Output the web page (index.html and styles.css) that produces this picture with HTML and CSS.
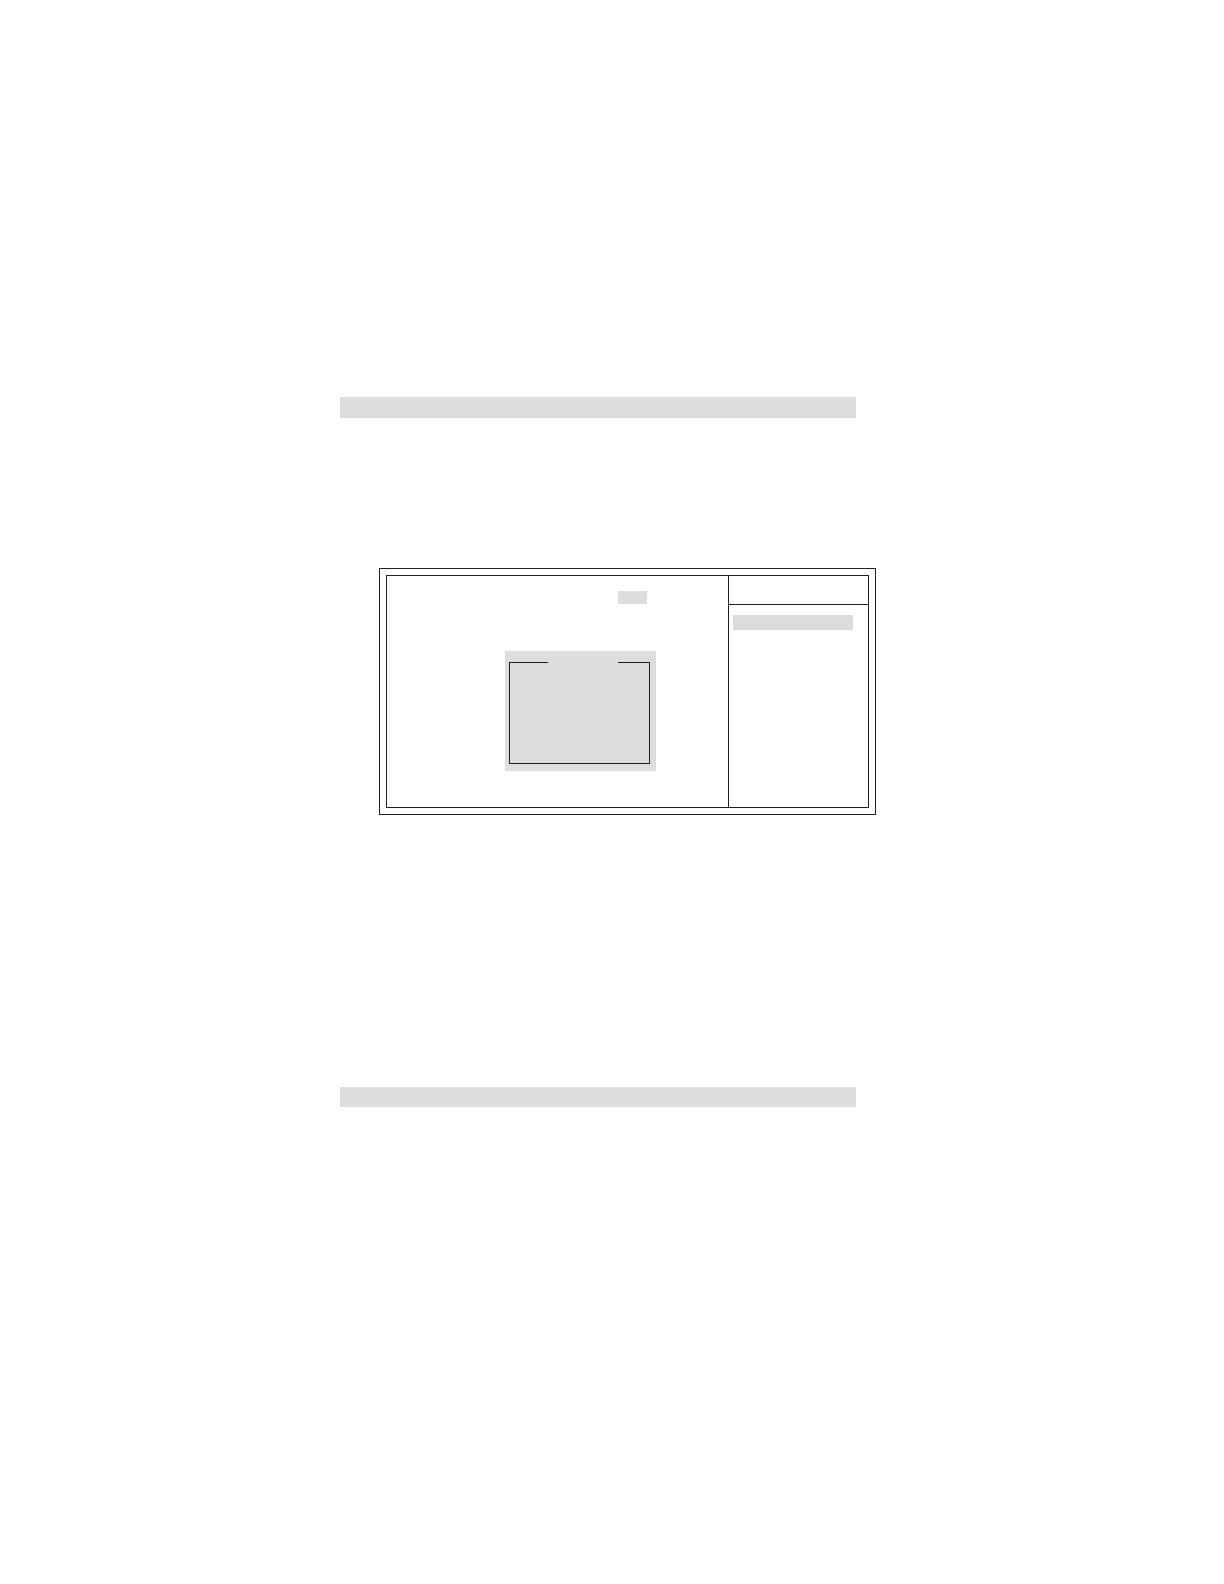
FILE: index.html
```html
<!DOCTYPE html>
<html lang="en">
<head>
  <meta charset="UTF-8">
  <meta name="viewport" content="width=device-width, initial-scale=1.0">
  <title>Setup Screen</title>
  <link rel="stylesheet" href="styles.css">
</head>
<body>
  <header class="bar"></header>

  <main class="frame">
    <div class="screen">
      <section class="settings">
        <div class="value"></div>
        <div class="popup">
          <div class="options">
            <div class="options-top"></div>
          </div>
        </div>
      </section>
      <aside class="help">
        <div class="help-title"></div>
        <div class="help-selected"></div>
      </aside>
    </div>
  </main>

  <footer class="bar"></footer>
</body>
</html>
```

FILE: styles.css
```css
* {
  box-sizing: border-box;
}
body {
  margin: 0;
  padding: 397px 348px 477px 340px;
  background-color: #ffffff;
  font-family: "Liberation Sans", Arial, sans-serif;
}
.bar {
  height: 21px;
  margin-right: 20px;
  background-color: #dcdddd;
}
footer.bar {
  height: 20px;
}

/* double outline around the screen */
.frame {
  margin: 150px 0 272px 39px;
  padding: 6px;
  border: 1px solid #1f1e22;
}
.screen {
  display: grid;
  grid-template-columns: 1fr 140px;
  border: 1px solid #1f1e22;
}

.settings {
  display: flex;
  flex-direction: column;
  padding: 15px 0 36px;
}
.value {
  align-self: flex-end;
  width: 29px;
  height: 13px;
  margin-right: 81px;
  background-color: #dcdddd;
}
.popup {
  margin: 47px 72px 0 118px;
  padding: 11px 6px 7px 4px;
  background-color: #dcddde;
}
.options {
  height: 102px;
  border: 1px solid #1f1e22;
  border-top: none;
}
/* top line, left open in the middle for the title */
.options-top {
  display: flex;
  justify-content: space-between;
}
.options-top::before,
.options-top::after {
  content: "";
  height: 1px;
  background-color: #1f1e22;
}
.options-top::before {
  width: 38px;
}
.options-top::after {
  width: 31px;
}

.help {
  border-left: 1px solid #1f1e22;
}
.help-title {
  height: 29px;
  border-bottom: 1px solid #1f1e22;
}
.help-selected {
  height: 15px;
  margin: 10px 15px 0 4px;
  background-color: #dcdcdc;
}
```
